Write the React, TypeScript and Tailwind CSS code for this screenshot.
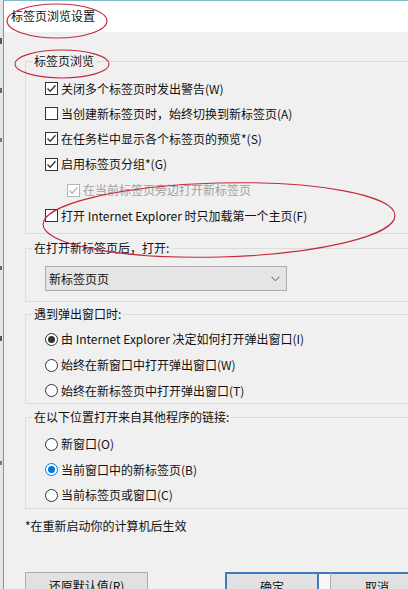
import React from "react";

function CheckBox({ checked, disabled }: { checked?: boolean; disabled?: boolean }) {
  const c = disabled ? "#b5b5b5" : "#333333";
  return (
    <svg width="13" height="13" viewBox="0 0 13 13" className="shrink-0">
      <rect x="0.5" y="0.5" width="12" height="12" fill="#ffffff" stroke={c} />
      {checked && (
        <polyline points="2.5,6.5 5.2,9.3 10.5,3.2" fill="none" stroke={c} strokeWidth="1.3" />
      )}
    </svg>
  );
}

function Radio({ checked, blue }: { checked?: boolean; blue?: boolean }) {
  const c = blue ? "#0078d7" : "#333333";
  return (
    <svg width="13" height="13" viewBox="0 0 13 13" className="shrink-0">
      <circle cx="6.5" cy="6.5" r="6" fill="#ffffff" stroke={checked ? c : "#333333"} />
      {checked && <circle cx="6.5" cy="6.5" r="3.5" fill={c} />}
    </svg>
  );
}

function CheckRow({
  label,
  checked,
  disabled,
  indent,
  h,
}: {
  label: string;
  checked?: boolean;
  disabled?: boolean;
  indent?: boolean;
  h: string;
}) {
  return (
    <div className={`flex items-center gap-[3px] shrink-0 ${h} ${indent ? "pl-[41px]" : "pl-[19px]"}`}>
      <CheckBox checked={checked} disabled={disabled} />
      <span className={disabled ? "text-[#a0a0a0]" : "text-[#111]"}>{label}</span>
    </div>
  );
}

function RadioRow({ label, checked, blue, h }: { label: string; checked?: boolean; blue?: boolean; h: string }) {
  return (
    <div className={`flex items-center gap-[3px] shrink-0 pl-[19px] ${h}`}>
      <Radio checked={checked} blue={blue} />
      <span className="text-[#111]">{label}</span>
    </div>
  );
}

export default function App() {
  return (
    <div className="relative w-[408px] h-[589px] overflow-hidden bg-[#f0f0f0] flex items-start font-['Noto_Sans_CJK_SC',sans-serif] text-[12px] leading-[16px] text-[#111]">
      {/* background window sliver */}
      <div className="w-[3px] h-[589px] shrink-0 bg-[#e4e7e9] flex flex-col">
        <div className="h-[38px] shrink-0" />
        <div className="h-[6px] w-[2px] shrink-0 bg-[#555]" />
        <div className="h-[44px] shrink-0" />
        <div className="h-[5px] w-[2px] shrink-0 bg-[#666]" />
        <div className="h-[45px] shrink-0" />
        <div className="h-[4px] w-[2px] shrink-0 bg-[#777]" />
        <div className="h-[124px] shrink-0" />
        <div className="h-[4px] w-[2px] shrink-0 bg-[#666]" />
        <div className="h-[66px] shrink-0" />
        <div className="h-[5px] w-[2px] shrink-0 bg-[#555]" />
        <div className="h-[120px] shrink-0" />
        <div className="h-[4px] w-[2px] shrink-0 bg-[#777]" />
      </div>

      {/* dialog window */}
      <div className="w-[450px] min-h-[589px] shrink-0 border-l border-[#5aa3b5] flex flex-col">
        <div className="h-[32px] shrink-0 bg-white border-t border-[#7fbccb] flex items-center pl-[7px] pb-[1px]">
          <span className="text-[12px] text-[#111]">标签页浏览设置</span>
        </div>

        <div className="flex flex-col shrink-0 pl-[21px]">
          {/* group 1 */}
          <fieldset className="mt-[21px] border border-[#dcdcdc] pb-[5px]">
            <legend className="ml-[6px] px-[2px] leading-[16px]">标签页浏览</legend>
            <div className="pt-[7px] flex flex-col">
              <CheckRow h="h-[25px]" checked label="关闭多个标签页时发出警告(W)" />
              <CheckRow h="h-[25px]" label="当创建新标签页时，始终切换到新标签页(A)" />
              <CheckRow h="h-[25px]" checked label="在任务栏中显示各个标签页的预览*(S)" />
              <CheckRow h="h-[26px]" checked label="启用标签页分组*(G)" />
              <CheckRow h="h-[26px]" checked disabled indent label="在当前标签页旁边打开新标签页" />
              <CheckRow h="h-[25px]" label="打开 Internet Explorer 时只加载第一个主页(F)" />
            </div>
          </fieldset>

          {/* group 2 */}
          <fieldset className="mt-[6px] border border-[#dcdcdc] pb-[10px]">
            <legend className="ml-[6px] px-[2px] leading-[16px]">在打开新标签页后，打开:</legend>
            <div className="pt-[10px] pl-[19px]">
              <div className="w-[242px] h-[25px] bg-[#e5e5e5] border border-[#adadad] flex items-center justify-between pl-[3px] pr-[6px]">
                <span>新标签页页</span>
                <svg width="9" height="6" viewBox="0 0 9 6">
                  <polyline points="0.5,0.8 4.5,4.8 8.5,0.8" fill="none" stroke="#555" strokeWidth="1" />
                </svg>
              </div>
            </div>
          </fieldset>

          {/* group 3 */}
          <fieldset className="mt-[4px] border border-[#dcdcdc]">
            <legend className="ml-[6px] px-[2px] leading-[16px]">遇到弹出窗口时:</legend>
            <div className="pt-[4px] flex flex-col">
              <RadioRow h="h-[26px]" checked label="由 Internet Explorer 决定如何打开弹出窗口(I)" />
              <RadioRow h="h-[26px]" label="始终在新窗口中打开弹出窗口(W)" />
              <RadioRow h="h-[25px]" label="始终在新标签页中打开弹出窗口(T)" />
            </div>
          </fieldset>

          {/* group 4 */}
          <fieldset className="mt-[5px] border border-[#dcdcdc]">
            <legend className="ml-[6px] px-[2px] leading-[16px]">在以下位置打开来自其他程序的链接:</legend>
            <div className="pt-[6px] flex flex-col">
              <RadioRow h="h-[26px]" label="新窗口(O)" />
              <RadioRow h="h-[25px]" checked blue label="当前窗口中的新标签页(B)" />
              <RadioRow h="h-[26px]" label="当前标签页或窗口(C)" />
            </div>
          </fieldset>

          <div className="mt-[9px] h-[16px]">*在重新启动你的计算机后生效</div>

          <div className="mt-[38px] flex">
            <div className="w-[123px] h-[28px] bg-[#e1e1e1] border border-[#adadad] flex items-center justify-center">
              还原默认值(R)
            </div>
            <div className="ml-[77px] flex">
              <div className="w-[94px] h-[28px] bg-[#e1e1e1] border-2 border-b-0 border-[#3a7dbb] flex items-center justify-center">
                确定
              </div>
              <div className="w-[11px] h-[28px] border-t-2 border-[#3a7dbb] bg-[#f7f7f7]" />
              <div className="w-[120px] h-[28px] bg-[#e1e1e1] border-t-2 border-[#3a7dbb] border-l border-l-[#adadad] flex items-center pl-[34px]">
                取消
              </div>
            </div>
          </div>
        </div>
      </div>

      {/* red annotation ellipses */}
      <svg className="absolute left-0 top-0 pointer-events-none" width="408" height="589" viewBox="0 0 408 589">
        <ellipse cx="57" cy="21" rx="50" ry="17" fill="none" stroke="#c42a3e" strokeWidth="1.1" />
        <ellipse cx="62" cy="64" rx="47" ry="14" fill="none" stroke="#c42a3e" strokeWidth="1.1" />
        <ellipse cx="219" cy="220" rx="176" ry="37" fill="none" stroke="#c42a3e" strokeWidth="1.1" transform="rotate(-1.5 219 220)" />
      </svg>
    </div>
  );
}
